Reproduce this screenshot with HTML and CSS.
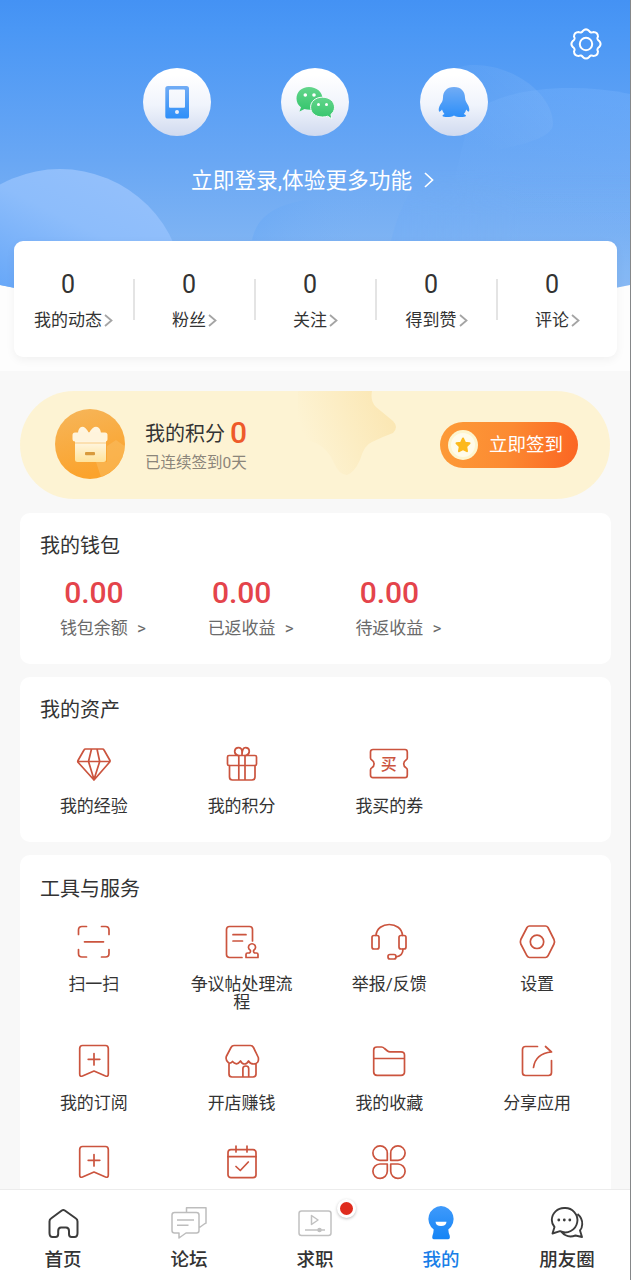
FILE: index.html
```html
<!DOCTYPE html>
<html lang="zh-CN">
<head>
<meta charset="utf-8">
<title>我的</title>
<link rel="stylesheet" href="styles.css">
</head>
<body>
<div class="app">
  <main class="content">
    <section class="hero">
      <svg class="hero-bg" viewBox="0 0 630 292" width="630" height="292" aria-hidden="true">
        <defs>
          <linearGradient id="sky" x1="0" y1="0" x2="0" y2="1"><stop offset="0" stop-color="#4492f4"/><stop offset=".1" stop-color="#4a97f5"/><stop offset=".55" stop-color="#69a7f4"/><stop offset="1" stop-color="#8bbbf3"/></linearGradient>
          <linearGradient id="orb" x1=".75" y1="0" x2=".25" y2="1"><stop offset="0" stop-color="#94c0fb"/><stop offset=".25" stop-color="#8dbdfb"/><stop offset=".6" stop-color="#65a6f8"/><stop offset="1" stop-color="#5fa2f8"/></linearGradient>
          <linearGradient id="mist" gradientUnits="userSpaceOnUse" x1="535" y1="80" x2="480" y2="145"><stop offset="0" stop-color="#fff" stop-opacity=".08"/><stop offset="1" stop-color="#fff" stop-opacity="0"/></linearGradient>
          <linearGradient id="haze" gradientUnits="userSpaceOnUse" x1="600" y1="88" x2="560" y2="230"><stop offset="0" stop-color="#7fb8ff" stop-opacity=".3"/><stop offset="1" stop-color="#7fb8ff" stop-opacity="0"/></linearGradient>
          <linearGradient id="pool" gradientUnits="userSpaceOnUse" x1="262" y1="205" x2="370" y2="245"><stop offset="0" stop-color="#5fa4f6" stop-opacity=".35"/><stop offset="1" stop-color="#7db4f7" stop-opacity="0"/></linearGradient>
          <linearGradient id="dune" gradientUnits="userSpaceOnUse" x1="386" y1="0" x2="520" y2="0"><stop offset="0" stop-color="#6caaf8" stop-opacity=".3"/><stop offset="1" stop-color="#6caaf8" stop-opacity=".1"/></linearGradient>
          <linearGradient id="duneFade" gradientUnits="userSpaceOnUse" x1="0" y1="170" x2="0" y2="215"><stop offset="0" stop-color="#fff" stop-opacity="0"/><stop offset="1" stop-color="#fff"/></linearGradient>
          <mask id="duneMask"><rect width="630" height="292" fill="url(#duneFade)"/></mask>
          <clipPath id="heroClip"><path d="M0 0H630V285Q315 350 0 285Z"/></clipPath>
        </defs>
        <g clip-path="url(#heroClip)">
          <rect width="630" height="292" fill="url(#sky)"/>
          <path d="M430 100C440 75 455 65 474 65C515 65 553 95 553 124C553 142 500 150 440 160Z" fill="url(#mist)"/>
          <path d="M470 115C500 88 570 82 630 94V240H440Z" fill="url(#haze)"/>
          <path d="M386 292C386 240 400 190 440 160H630V292Z" fill="url(#dune)" mask="url(#duneMask)"/>
          <path d="M252 240C257 217 273 206 305 200H386V240Z" fill="url(#pool)"/>
          <circle cx="60" cy="293" r="124" fill="url(#orb)"/>
        </g>
      </svg>
      <div class="hero-top">
        <svg class="gear" viewBox="0 0 34 34" fill="none" stroke="#fff" stroke-width="2" stroke-linejoin="round"><path d="M12 5.500Q13.300 5 13.800 4Q17 .8 20.200 4Q20.700 5 22 5.500Q23.200 5.800 24.300 5Q28.900 5.100 29 9.700Q28.200 10.800 28.500 12Q29 13.300 30 13.800Q33.200 17 30 20.200Q29 20.700 28.500 22Q28.200 23.200 29 24.300Q28.900 28.900 24.300 29Q23.200 28.200 22 28.500Q20.700 29 20.200 30Q17 33.200 13.800 30Q13.300 29 12 28.500Q10.800 28.200 9.700 29Q5.100 28.900 5 24.300Q5.800 23.200 5.500 22Q5 20.700 4 20.200Q.8 17 4 13.800Q5 13.300 5.500 12Q5.800 10.800 5 9.700Q5.100 5.100 9.700 5Q10.800 5.800 12 5.500Z"/><circle cx="17" cy="17" r="6.200"/></svg>
      </div>
      <div class="logins">
        <span class="login"><svg viewBox="0 0 68 68"><defs><linearGradient id="blue" x1="0" y1="0" x2="0" y2="1"><stop offset="0" stop-color="#71acf5"/><stop offset="1" stop-color="#2d8ff9"/></linearGradient></defs><path fill="url(#blue)" fill-rule="evenodd" d="M25 18H43.500Q46 18 46 20.500V48Q46 50.600 43.500 50.600H25Q22.300 50.600 22.300 48V20.500Q22.300 18 25 18ZM27 21.500Q26 21.500 26 22.500V38.800Q26 39.800 27 39.800H41Q42 39.800 42 38.800V22.500Q42 21.500 41 21.500ZM34 42A2 2 0 1 0 34 46A2 2 0 1 0 34 42Z"/></svg></span>
        <span class="login"><svg viewBox="0 0 68 68"><defs><linearGradient id="green" x1="0" y1="0" x2="0" y2="1"><stop offset="0" stop-color="#63d58b"/><stop offset="1" stop-color="#34c56c"/></linearGradient></defs><path fill="url(#green)" d="M28 19C20.500 19 15.500 24 15.500 30.500C15.500 34 17 37.300 20 39.300L18.500 43.500L23.500 41Q26 41.800 30 41.700C40 41 41.500 35 41.500 30.500C41.500 24 35.500 19 28 19Z"/><circle cx="24.300" cy="27" r="1.800" fill="#fff"/><circle cx="33" cy="27" r="1.800" fill="#fff"/><path fill="url(#green)" stroke="#f7fbfb" stroke-width="1" d="M41.500 29.200C34.500 29.200 29.600 33.500 29.600 39.200C29.600 45 34.500 49 41.500 49Q44.500 49 46.700 48.200L50.900 50.900L49.900 46.400C52.200 44.600 53.500 42.200 53.500 39.200C53.500 33.500 48.300 29.200 41.500 29.200Z"/><circle cx="37.500" cy="36.500" r="1.500" fill="#fff"/><circle cx="45.500" cy="36.500" r="1.500" fill="#fff"/></svg></span>
        <span class="login"><svg viewBox="0 0 68 68"><path fill="url(#blue)" d="M34 19C26.500 19 23 24 23 29.500Q23 31.500 22 34Q18.500 38.500 18.700 42Q19 44.500 20 43.500Q21 43 22 41.500Q22.700 44 24.500 46Q22 47 22.500 48C23.500 49.500 31.500 49.400 34 47.500C36.500 49.400 44.500 49.500 46 48Q46.300 47 43.800 46Q45.700 44 46.200 41.500Q47.500 43.500 48.500 43.700Q49.500 43.500 49.300 41Q49 38 46.200 34Q45 31.500 45 29.500C45 24 41.500 19 34 19Z"/></svg></span>
      </div>
      <div class="login-tip"><span>立即登录,体验更多功能</span><svg viewBox="0 0 10 16" fill="none" stroke="#fff" stroke-width="1.700"><path d="M1 1L8.500 8L1 15"/></svg></div>
      <div class="stats">
        <div class="stat"><div class="stat-in"><b>0</b><span>我的动态</span><svg class="chev" viewBox="0 0 9 13"><path d="M1 1L7.500 6.500L1 12"/></svg></div></div>
        <div class="stat"><div class="stat-in"><b>0</b><span>粉丝</span><svg class="chev" viewBox="0 0 9 13"><path d="M1 1L7.500 6.500L1 12"/></svg></div></div>
        <div class="stat"><div class="stat-in"><b>0</b><span>关注</span><svg class="chev" viewBox="0 0 9 13"><path d="M1 1L7.500 6.500L1 12"/></svg></div></div>
        <div class="stat"><div class="stat-in"><b>0</b><span>得到赞</span><svg class="chev" viewBox="0 0 9 13"><path d="M1 1L7.500 6.500L1 12"/></svg></div></div>
        <div class="stat"><div class="stat-in"><b>0</b><span>评论</span><svg class="chev" viewBox="0 0 9 13"><path d="M1 1L7.500 6.500L1 12"/></svg></div></div>
      </div>
    </section>

    <section class="points">
      <svg class="points-star" viewBox="0 0 100 86"><defs><linearGradient id="pale" gradientUnits="userSpaceOnUse" x1="8" y1="50" x2="90" y2="20"><stop offset="0" stop-color="#fdf3d3"/><stop offset="1" stop-color="#fbe7b4"/></linearGradient></defs><path fill="url(#pale)" d="M0 0H74Q72 10 78 16L95 30Q101 36 95 42Q84 46 74 51Q66 54 62 69Q56 82 49 84Q41 84 36 72Q30 58 18 52L0 46Z"/></svg>
      <svg class="points-icon" viewBox="0 0 70 70"><defs><linearGradient id="coin" x1="0" y1="0" x2=".3" y2="1"><stop offset="0" stop-color="#f6b65b"/><stop offset="1" stop-color="#fba32c"/></linearGradient><linearGradient id="cream" x1="0" y1="0" x2="0" y2="1"><stop offset="0" stop-color="#fffaf0"/><stop offset="1" stop-color="#ffe39b"/></linearGradient></defs><circle cx="35" cy="35" r="35" fill="url(#coin)"/><path d="M41 53H52V37L61 31L69.500 37Q69 58 46 68Z" fill="#f9bd63" opacity=".55"/><path d="M34 24C29 14 23 17 23 25ZM34 24C39 14 46 17 46 25Z" fill="#fff5df"/><rect x="20" y="29" width="31" height="24" rx="2.500" fill="url(#cream)"/><rect x="17.500" y="23.500" width="35" height="9" rx="2.500" fill="#fff4dc"/><path d="M20 33H51V35H20Z" fill="#fad291" opacity=".6"/><rect x="30" y="43" width="10" height="3.200" rx="1" fill="#d99a3c"/></svg>
      <div class="points-text"><div class="points-line">我的积分<b>0</b></div><div class="points-sub">已连续签到0天</div></div>
      <div class="sign"><svg viewBox="0 0 30 30"><circle cx="15" cy="15" r="15" fill="#fdf5cf"/><circle cx="15" cy="15" r="12" fill="#fffbea"/><path fill="#fcb91c" stroke="#fcb91c" stroke-width="2" stroke-linejoin="round" d="M15 8.500L17 12.700L21.500 13.300L18.200 16.600L19 21.200L15 19L11 21.200L11.800 16.600L8.500 13.300L13 12.700Z"/></svg><span>立即签到</span></div>
    </section>

    <section class="card wallet">
      <h2>我的钱包</h2>
      <div class="grid">
        <div class="money"><b>0.00</b><span>钱包余额<i>&gt;</i></span></div>
        <div class="money"><b>0.00</b><span>已返收益<i>&gt;</i></span></div>
        <div class="money"><b>0.00</b><span>待返收益<i>&gt;</i></span></div>
      </div>
    </section>

    <section class="card assets">
      <h2>我的资产</h2>
      <div class="grid">
        <div class="item"><svg class="ic" viewBox="0 0 44 44"><path d="M13.500 7H30.500Q31.500 7 32 8L38 18.500Q38.200 19.500 37.500 20.300L22 38L6 20.300Q5.500 19.500 6 18.500L12 8Q12.500 7 13.500 7ZM6 19.500H38M19.500 7L16.500 19.500L22 37.500L27.700 19.500L25 7"/></svg><span>我的经验</span></div>
        <div class="item"><svg class="ic" viewBox="0 0 44 44"><rect x="7.500" y="13.500" width="29" height="10" rx="1.500"/><path d="M9.500 23.500V35Q9.500 38 12.500 38H32Q35 38 35 35V23.500M18.800 13.500V38M25 13.500V38M18 13.500Q14.500 12.500 14.700 9Q15.200 5.700 18.400 5.700Q21.800 5.700 22 9.500V13Q22 5.700 25.600 5.700Q29 5.700 29.300 9Q29.300 12.500 26 13.500"/></svg><span>我的积分</span></div>
        <div class="item"><svg class="ic" viewBox="0 0 44 44"><path d="M6 7.500H38Q40.300 7.500 40.300 10V16Q40.300 17.300 39 18A4.500 4.500 0 0 0 39 25.800Q40.300 26.500 40.300 28V33Q40.300 35.700 38 35.700H6Q3.500 35.700 3.500 33V28Q3.500 26.500 4.800 25.800A4.500 4.500 0 0 0 4.800 18Q3.500 17.300 3.500 16V10Q3.500 7.500 6 7.500Z"/><text x="21.800" y="28" text-anchor="middle">买</text></svg><span>我买的券</span></div>
      </div>
    </section>

    <section class="card tools">
      <h2>工具与服务</h2>
      <div class="grid">
        <div class="item"><svg class="ic" viewBox="0 0 44 44"><path d="M6.500 14.500V10Q6.500 6.500 10 6.500H14.500M29.500 6.500H33.500Q37 6.500 37 10V14.500M37 29.500V33.500Q37 37 33.500 37H29.500M14.500 37H10Q6.500 37 6.500 33.500V29.500M12.500 21.800H31.500"/></svg><span>扫一扫</span></div>
        <div class="item"><svg class="ic" viewBox="0 0 44 44"><path d="M22 37.500H9.500Q6.500 37.500 6.500 34.500V9.500Q6.500 6.500 9.500 6.500H29.500Q32.500 6.500 32.500 9.500V21M13 14.700H26M13 21H22.500M26 37.500V34.500Q26 33 27.500 33H29.500Q31 32 30.300 30.300A3.500 3.500 0 1 1 33.700 30.300Q33 32 34.500 33H36.500Q38 33 38 34.500V37.500Z"/></svg><span>争议帖处理流程</span></div>
        <div class="item"><svg class="ic" viewBox="0 0 44 44"><rect x="5" y="15.500" width="7" height="13.500" rx="2"/><rect x="32" y="15.500" width="7" height="13.500" rx="2"/><rect x="21" y="34.500" width="8" height="4.500" rx="2"/><path d="M9 15.500C10 .8 34.500 .8 35.500 15.500M36 29Q36 36 29 37"/></svg><span>举报/反馈</span></div>
        <div class="item"><svg class="ic" viewBox="0 0 44 44"><path d="M14.500 6H30.500Q32 6 33 7.500L39 19.500Q40 21.700 39 24L33 35.800Q32 37.500 30.500 37.500H14.500Q13 37.500 12 35.800L5.800 24Q5 21.700 5.800 19.500L12 7.500Q13 6 14.500 6Z"/><circle cx="22" cy="21.800" r="6.700"/></svg><span>设置</span></div>
        <div class="item"><svg class="ic" viewBox="0 0 44 44"><path id="bookmark" d="M10.500 6.500H33.500Q36.300 6.500 36.300 9.500V35Q36.300 38 33.500 37L22 32L10.500 37Q7.700 38 7.700 35V9.500Q7.700 6.500 10.500 6.500ZM22 14.500V26M16.200 20.300H27.800"/></svg><span>我的订阅</span></div>
        <div class="item"><svg class="ic" viewBox="0 0 44 44"><path d="M14 6.500H30.500Q32.500 6.500 33.500 8.500L38.300 18.500Q39.300 24.500 34 25Q30 25 28.500 22Q27 25 24.500 25Q22 25 20.500 22Q18.500 24.800 16.500 24.800Q14 24.500 12.500 22.500Q10.500 24.800 8.500 23.800Q5.300 21.500 6.300 17.500L11 8.500Q12 6.500 14 6.500ZM9 24V35Q9 38 12 38H33Q36 38 36 35V25M22.900 38V29.500Q23 27 25.900 27Q28.700 27 28.700 29.500V38"/></svg><span>开店赚钱</span></div>
        <div class="item"><svg class="ic" viewBox="0 0 44 44"><path d="M10 8H14.500Q16 8 17.500 9.500L20.500 12Q21.500 12.800 23 12.800H34Q37.500 12.800 37.500 16V33Q37.500 36.300 34 36.300H10Q6.700 36.300 6.700 33V11Q6.700 8 10 8ZM6.700 19.500H37.500"/></svg><span>我的收藏</span></div>
        <div class="item"><svg class="ic" viewBox="0 0 44 44"><path d="M22.500 7.500H10.500Q7.500 7.500 7.500 10.500V33.500Q7.500 36.500 10.500 36.500H33.500Q36.500 36.500 36.500 33.500V21.500M18.500 28.500Q20.500 14.500 36.500 13L30.500 7.500"/></svg><span>分享应用</span></div>
        <div class="item"><svg class="ic" viewBox="0 0 44 44"><use href="#bookmark"/></svg></div>
        <div class="item"><svg class="ic" viewBox="0 0 44 44"><rect x="8" y="9.700" width="28" height="28" rx="3"/><path d="M8 16.700H36M16 6V12M27 6V12M16 26.500L20.300 30.500L28.300 22"/></svg></div>
        <div class="item"><svg class="ic" viewBox="0 0 44 44"><path d="M20.300 20.300H13A7.200 7.200 0 1 1 20.300 13ZM23.700 20.300H31A7.200 7.200 0 1 0 23.700 13ZM20.300 24H13A7.200 7.200 0 1 0 20.300 31.300ZM23.700 24H31A7.200 7.200 0 1 1 23.700 31.300Z"/></svg></div>
      </div>
    </section>
  </main>

  <nav class="tabs">
    <a class="tab"><svg viewBox="0 0 40 40" fill="none" stroke="#3c3c3c" stroke-width="2" stroke-linejoin="round"><path d="M18.800 7.500Q20.300 6.500 21.800 7.500L33 15.500Q34.500 16.500 34.500 18.500V30Q34.500 34 31.500 34H28.500Q26 34 26 31V28Q26 24.500 23 24.500H18Q15.200 24.500 15.200 28V31Q15.200 34 12.500 34H9.500Q6.500 34 6.500 30V18.500Q6.500 16.500 8 15.500Z"/></svg><span>首页</span></a>
    <a class="tab"><svg viewBox="0 0 40 40" fill="none" stroke="#bdbdbd" stroke-width="1.500" stroke-linejoin="round"><path d="M5.500 9.500H27.500Q30 9.500 30 12V27.500Q30 30 27.500 30H17L10 35V30H5.500Q3 30 3 27.500V12Q3 9.500 5.500 9.500ZM17.500 9V4.700H37V20Q37 20.500 36 20.500L30.500 24.500M8 17H25M8 22.200H19.500"/></svg><span>论坛</span></a>
    <a class="tab"><svg viewBox="0 0 40 40" fill="none" stroke="#c1c1c1" stroke-width="1.500" stroke-linejoin="round"><rect x="4" y="8" width="32" height="24.500" rx="2.500"/><path d="M16.500 12.500V21.500L23 17ZM10 27H30"/><circle cx="24.500" cy="27" r="1.500" fill="#c1c1c1"/></svg><i class="dot"></i><span>求职</span></a>
    <a class="tab active"><svg viewBox="0 0 40 40"><defs><linearGradient id="meg" x1="0" y1="0" x2="0" y2="1"><stop offset="0" stop-color="#3f9afb"/><stop offset="1" stop-color="#1584f5"/></linearGradient></defs><path fill="url(#meg)" d="M20 3A13 13 0 0 0 12.700 26.500Q12.500 30 11.500 32.500Q10.500 36.300 13 36.300H27Q29.500 36.300 28.700 32.500Q27.500 30 27.300 26.500A13 13 0 0 0 20 3Z"/><path fill="#fff" d="M14.500 18.800H25.500Q25.300 23 20 23Q14.700 23 14.500 18.800Z"/></svg><span>我的</span></a>
    <a class="tab"><svg viewBox="0 0 40 40" fill="none" stroke="#3c3c3c" stroke-width="1.900" stroke-linejoin="round"><path d="M17.300 5A12.200 12.200 0 1 1 13 28.200L5.500 30.500L7.500 24Q4.800 21 4.800 17A12.300 12.300 0 0 1 17.300 5ZM30.500 11Q35.800 15.500 35.200 21.500Q35 25.500 33 27.500L35 34L28.500 32.500Q20 35.500 14.500 29"/><g fill="#3c3c3c" stroke="none"><circle cx="11.800" cy="17" r="1.400"/><circle cx="17.300" cy="17" r="1.400"/><circle cx="22.800" cy="17" r="1.400"/></g></svg><span>朋友圈</span></a>
  </nav>
</div>
</body>
</html>
```
FILE: styles.css
```css
* { box-sizing: border-box; }

body {
  margin: 0;
  font-family: Roboto, "Noto Sans CJK SC", sans-serif;
  color: #333;
}

i { font-style: normal; }
svg { display: block; flex: none; }

.app {
  width: 631px;
  height: 1280px;
  display: flex;
  flex-direction: column;
  overflow: hidden;
  background: #f8f8f8;
  border-right: 1px solid #858789;
}

.content {
  height: 1189px;
  flex: none;
  overflow: hidden;
}

/* Header */
.hero {
  position: relative;
  height: 371px;
  background: #fdfdfd;
}

.hero-bg { position: absolute; left: 0; top: 0; }

.hero-top {
  position: relative;
  display: flex;
  justify-content: flex-end;
  height: 68px;
  padding: 27px 27px 0 0;
}

.gear { width: 34px; height: 34px; }

.logins {
  position: relative;
  display: flex;
  justify-content: center;
  gap: 70.5px;
}

.login {
  width: 68px;
  height: 68px;
  border-radius: 50%;
  background: linear-gradient(#fff 10%, #f0f4fc 55%, #d0daef);
}

.login-tip {
  position: relative;
  display: flex;
  align-items: center;
  gap: 12px;
  height: 30px;
  margin: 30px 0 0 191px;
  color: #fff;
  font-size: 21.7px;
  line-height: 26px;
}

.login-tip svg { width: 10px; height: 16px; margin-bottom: 2px; }

.stats {
  position: relative;
  display: grid;
  grid-template-columns: repeat(5, 121px);
  justify-content: center;
  height: 116px;
  margin: 45px 13px 0 14px;
  border-radius: 9px;
  background: #fff;
  box-shadow: 0 3px 10px rgba(0, 0, 0, .05);
}

.stat {
  position: relative;
  display: flex;
  justify-content: center;
  padding-top: 28px;
}

.stat + .stat::before {
  content: "";
  position: absolute;
  left: -1px;
  top: 38px;
  width: 2px;
  height: 41px;
  background: #e4e4e4;
}

.stat-in {
  display: grid;
  grid-template-columns: auto 9px;
  column-gap: 2px;
  grid-template-rows: 31px 24px;
  row-gap: 8px;
  align-content: start;
  align-items: center;
  justify-items: center;
  font-size: 17px;
  line-height: 24px;
}

.stat-in b {
  font-size: 25px;
  font-weight: 400;
  line-height: 31px;
}

.stat-in span { grid-column: 1; }

.chev {
  width: 9px;
  height: 13px;
  fill: none;
  stroke: #a4a4a4;
  stroke-width: 1.8;
}

/* Points banner */
.points {
  position: relative;
  display: flex;
  align-items: center;
  height: 108px;
  margin: 20px 20px 14px;
  padding: 0 32px 0 35px;
  border-radius: 54px;
  background: #fdf3d3;
}

.points-star {
  position: absolute;
  left: 278px;
  top: 0;
  width: 100px;
  height: 86px;
}

.points-icon { width: 70px; height: 70px; margin-bottom: 2px; }

.points-text { position: relative; margin-left: 20px; padding-top: 4px; }

.points-line {
  display: flex;
  align-items: center;
  height: 30px;
  font-size: 20px;
}

.points-line b {
  margin-left: 5px;
  color: #ee5a2a;
  font-size: 30px;
  font-weight: 500;
}

.points-sub {
  height: 30px;
  color: #8b857a;
  font-size: 15.5px;
  line-height: 32px;
}

.sign {
  position: relative;
  display: flex;
  align-items: center;
  gap: 11px;
  width: 138px;
  height: 46px;
  margin-left: auto;
  padding-left: 8px;
  border-radius: 23px;
  background: linear-gradient(100deg, #fd9b38, #fc8a32 50%, #fb6422);
  color: #fff;
  font-size: 18.5px;
}

.sign span { padding-bottom: 4px; }
.sign svg { width: 30px; height: 30px; }

/* Cards */
.card {
  margin: 0 19px 13px 20px;
  border-radius: 10px;
  background: #fff;
}

.card h2 {
  margin: 0;
  padding-left: 20px;
  height: 65px;
  font-size: 20px;
  font-weight: 400;
  line-height: 66px;
}

.grid {
  display: grid;
  grid-template-columns: repeat(4, 1fr);
}

.wallet { height: 151px; }
.assets { height: 165px; }
.tools { height: 480px; }
.tools h2 { line-height: 68px; }

.money {
  display: flex;
  flex-direction: column;
  align-items: center;
}

.money b {
  height: 32px;
  color: #e4444b;
  font-size: 30px;
  font-weight: 500;
  line-height: 30px;
}

.money span {
  display: flex;
  height: 34px;
  color: #6a6a6a;
  font-size: 17px;
  line-height: 36px;
}

.money i { width: 0; text-indent: 9px; white-space: nowrap; }

.item {
  display: flex;
  flex-direction: column;
  align-items: center;
  gap: 11px;
  padding: 0 20px 28px;
  font-size: 17px;
  line-height: 18px;
  text-align: center;
}

.ic {
  width: 44px;
  height: 44px;
  fill: none;
  stroke: #cb543e;
  stroke-width: 1.7;
  stroke-linecap: round;
  stroke-linejoin: round;
}

.ic text { fill: #cb543e; stroke: none; font-size: 16px; font-weight: 500; }

/* Bottom bar */
.tabs {
  display: grid;
  grid-template-columns: repeat(5, 1fr);
  height: 91px;
  border-top: 1px solid #ececec;
  background: #fff;
}

.tab {
  position: relative;
  display: flex;
  flex-direction: column;
  align-items: center;
  padding-top: 13px;
  font-size: 18.5px;
  font-weight: 500;
  line-height: 34px;
}

.tab svg { width: 40px; height: 40px; }
.active { color: #1a7fe8; }

.dot {
  position: absolute;
  left: 85px;
  top: 9px;
  width: 19px;
  height: 19px;
  border: 3px solid #fff;
  border-radius: 50%;
  background: #df2c1e;
  box-shadow: 0 1px 3px rgba(0, 0, 0, .25);
}
```
